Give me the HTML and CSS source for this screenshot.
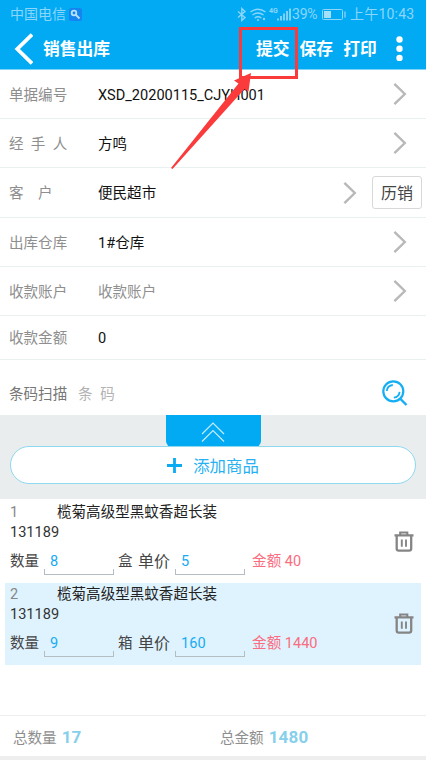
FILE: index.html
```html
<!DOCTYPE html>
<html lang="zh-CN">
<head>
<meta charset="utf-8">
<title>销售出库</title>
<link rel="stylesheet" href="styles.css">
</head>
<body>
<svg class="defs" width="0" height="0">
  <symbol id="chev" viewBox="0 0 14 24"><path d="M1.4 1.8L11.8 12L1.4 22.2" fill="none" stroke="#b8b8b8" stroke-width="2.4"/></symbol>
  <symbol id="trash" viewBox="0 0 20 21"><g fill="none" stroke="#858585"><path d="M.5 4.4H19.5M6.2 4V1.5H13.3V4" stroke-width="2.1"/><path d="M2.7 5V17.5Q2.7 19.6 4.8 19.6H15Q17.2 19.6 17.2 17.5V5" stroke-width="2.3"/><path d="M7.8 8.4V15.8M12 8.4V15.8" stroke-width="1.9"/></g></symbol>
</svg>
<div class="screen">
  <header class="header">
    <div class="status">
      <span>中国电信</span>
      <svg class="key" width="13" height="13" viewBox="0 0 13 13"><rect width="13" height="13" rx="2.5" fill="#1684ee"/><circle cx="5" cy="5" r="2.3" fill="none" stroke="#b5e2ff" stroke-width="1.8"/><path d="M6.5 6.5L10.5 10.5" stroke="#b5e2ff" stroke-width="1.8"/></svg>
      <svg class="signals" width="54" height="15" viewBox="0 0 54 15"><g fill="none" stroke="#8bd6fa" stroke-width="1.4"><path d="M1 4.5L8 10.5L4.8 13.5V1.5L8 4.5L1 10.5"/><path d="M13.5 5Q21 -.5 28.5 5M15.5 8Q21 4 26.5 8M17.7 11Q21 8.5 24.3 11"/></g><circle cx="21" cy="13" r="1" fill="#8bd6fa"/><circle cx="27" cy="12" r="1.2" fill="#8bd6fa"/><text x="32" y="6" class="net">4G</text><path d="M41 13.5V11.5M44 13.5V9M47 13.5V6.5M50 13.5V4M53 13.5V1.5" stroke="#8bd6fa" stroke-width="1.8"/></svg>
      <span class="pct">39%</span>
      <svg class="batt" width="24" height="11" viewBox="0 0 24 11"><rect x=".5" y=".5" width="20" height="10" rx="1" fill="none" stroke="#8bd6fa"/><rect x="2" y="2" width="7" height="7" fill="#a5e0fb"/><path d="M23 2.5V8.5" stroke="#8bd6fa" stroke-width="1.3"/></svg>
      <span class="clock">上午10:43</span>
    </div>
    <div class="bar">
      <svg class="back" width="19" height="32" viewBox="0 0 19 32"><path d="M18 1.5L3.3 16L18 30.5" fill="none" stroke="#fff" stroke-width="3.8"/></svg>
      <h1>销售出库</h1>
      <span class="act submit">提交</span><span class="act save">保存</span><span class="act print">打印</span>
      <svg class="more" width="7" height="26" viewBox="0 0 7 26"><g fill="#fff"><circle cx="3.5" cy="3.5" r="3.2"/><circle cx="3.5" cy="12.7" r="3.2"/><circle cx="3.5" cy="21.9" r="3.2"/></g></svg>
    </div>
  </header>
  <main>
    <div class="row"><span class="label">单据编号</span><span class="value">XSD_20200115_CJYH001</span><svg class="chev"><use href="#chev"/></svg></div>
    <div class="row"><span class="label three">经手人</span><span class="value">方鸣</span><svg class="chev"><use href="#chev"/></svg></div>
    <div class="row tall"><span class="label two">客户</span><span class="value">便民超市</span><svg class="chev"><use href="#chev"/></svg><span class="history">历销</span></div>
    <div class="row"><span class="label">出库仓库</span><span class="value">1#仓库</span><svg class="chev"><use href="#chev"/></svg></div>
    <div class="row"><span class="label">收款账户</span><span class="value empty">收款账户</span><svg class="chev"><use href="#chev"/></svg></div>
    <div class="row short"><span class="label">收款金额</span><span class="value">0</span></div>
    <div class="scan"><span class="label">条码扫描</span><span class="hint">条 码</span>
      <svg width="26" height="26" viewBox="0 0 26 26" fill="none" stroke="#14aef4"><circle cx="11.3" cy="11.3" r="10" stroke-width="2.2"/><path d="M18 18.5L24.5 25" stroke-width="2.4"/><path d="M4.8 11Q5.3 5.5 10.8 5M17.6 11.8Q17 17 11.8 17.6" stroke-width="1.8"/></svg>
    </div>
    <section class="add">
      <div class="tab"><svg width="24" height="20" viewBox="0 0 24 20"><path d="M1 12L12 1L23 12M1 19.5L12 8.5L23 19.5" fill="none" stroke="#c4ecff" stroke-width="1.2"/></svg></div>
      <div class="pill"><svg width="15" height="15" viewBox="0 0 15 15"><path d="M0 7.5H15M7.5 0V15" stroke="#0aabf3" stroke-width="2.8"/></svg><span>添加商品</span></div>
    </section>
    <section class="items">
      <article class="item">
        <div class="name"><span class="idx">1</span><span>榄菊高级型黑蚊香超长装</span></div>
        <div class="code">131189</div>
        <div class="nums"><span>数量</span><span class="field">8</span><span class="unit">盒</span><span class="price">单价</span><span class="field">5</span><span class="sum">金额 40</span></div>
        <svg class="trash"><use href="#trash"/></svg>
      </article>
      <article class="item alt">
        <div class="name"><span class="idx">2</span><span>榄菊高级型黑蚊香超长装</span></div>
        <div class="code">131189</div>
        <div class="nums"><span>数量</span><span class="field">9</span><span class="unit">箱</span><span class="price">单价</span><span class="field">160</span><span class="sum">金额 1440</span></div>
        <svg class="trash"><use href="#trash"/></svg>
      </article>
    </section>
  </main>
  <footer class="totals"><div>总数量<b>17</b></div><div>总金额<b>1480</b></div></footer>
  <svg class="callout" width="128" height="143" viewBox="0 0 128 143"><rect x="70.5" y="1.5" width="56" height="49" fill="none" stroke="#fb3b3b" stroke-width="3"/><path d="M81 46L64 53.5L68.5 56.5L1 141L2.5 142L74.5 62L78.5 64.5Z" fill="#fb3b3b"/></svg>
</div>
</body>
</html>
```

FILE: styles.css
```css
* { box-sizing: border-box; }
body { margin: 0; background: #fff; font-family: Roboto, "Noto Sans CJK SC", sans-serif; font-size: 14.55px; line-height: 20px; color: #222; }
svg { display: block; flex: none; }
.defs { position: absolute; }
.screen { position: relative; width: 426px; height: 760px; overflow: hidden; display: flex; flex-direction: column; }
span, h1, b { white-space: nowrap; }

.header { height: 70px; background: #02aaf4; border-bottom: 1px solid #7fd3f7; }
.status { height: 28px; display: flex; align-items: center; padding-left: 10px; color: #8bd6fa; font-size: 14px; }
.key { margin-left: 3px; }
.signals { margin-left: 155px; }
.net { font-size: 7px; font-weight: 700; fill: #8bd6fa; }
.pct { width: 30px; margin-left: 1px; letter-spacing: -.2px; }
.clock { margin-left: 4px; letter-spacing: .2px; }
.bar { height: 41px; display: flex; align-items: center; padding-left: 14px; color: #fff; font-weight: 700; font-size: 16.8px; }
.bar h1 { width: 213px; margin: 0 0 0 10px; font-size: 16.8px; font-weight: 700; }
.save { margin-left: 10px; }
.print { margin-left: 10px; }
.more { margin-left: 19px; }
.bar h1, .act { padding-top: 1px; }

.row { height: 49px; display: flex; align-items: center; padding: 0 19px 0 9px; border-bottom: 1px solid #e9f0f0; }
.tall { height: 50px; padding-right: 4px; }
.short { height: 44px; }
.label { width: 89px; color: #8e8e8e; }
.label, .value, .hint { padding-top: 3px; }
.three { letter-spacing: 7.3px; }
.two { letter-spacing: 14.5px; }
.value { flex: 1; color: #111; }
.empty { color: #909090; }
.chev { width: 14px; height: 24px; }
.history { width: 50px; height: 33px; margin-left: 15px; border: 1px solid #d8d8d8; border-radius: 3px; line-height: 34px; text-align: center; font-size: 16px; color: #444; }
.scan { height: 55px; display: flex; align-items: center; padding: 11px 18px 0 9px; }
.scan .label { width: 69px; color: #777; }
.hint { flex: 1; color: #b3b3b3; word-spacing: 4px; }

.add { height: 84px; background: #e9eded; display: flex; flex-direction: column; align-items: center; }
.tab { width: 95px; height: 32px; background: #02aaf4; border-radius: 0 0 6px 6px; display: flex; justify-content: center; padding-top: 7px; }
.pill { width: 406px; height: 38px; margin-top: -1px; background: #fff; border: 1px solid #8ed8f0; border-radius: 19px; display: flex; align-items: center; justify-content: center; gap: 11px; color: #27b1f3; font-size: 16.4px; }
.pill span { padding-top: 3px; }

.items { padding: 0 5px; }
.item { height: 84px; display: grid; grid-template-columns: 1fr 20px; grid-template-rows: 22px 20px 40px; padding: 2px 7px 0 5px; }
.item + .item { height: 82px; padding-top: 0; }
.alt { background: #dff3fe; }
.name { display: flex; align-items: center; height: 23px; }
.idx { width: 47px; color: #888; }
.code { grid-row: 2; line-height: 20px; color: #333; }
.nums { grid-row: 3; display: flex; align-items: center; color: #444; height: 37px; }
.field { position: relative; width: 70px; height: 32px; line-height: 31px; margin: 0 0 0 5px; padding-left: 6px; color: #16abf4; }
.field::after { content: ""; position: absolute; left: 0; right: 0; bottom: 3px; height: 5px; border: solid #b4bdc2; border-width: 0 1px 1px; }
.unit { width: 20px; margin-left: 4px; }
.price { font-size: 16px; width: 32px; }
.sum { margin-left: 7px; color: #fa6c80; }
.trash { grid-column: 2; grid-row: 1 / 4; width: 20px; height: 21px; margin-top: 30px; }

.totals { height: 41px; margin-top: auto; margin-bottom: 4px; border-top: 1px solid #eee; display: grid; grid-template-columns: 207px 1fr; padding: 4px 0 0 13px; align-items: center; color: #8e8e8e; }
.totals b { margin-left: 5px; color: #87d0ec; font-size: 17px; letter-spacing: .2px; }
.screen::after { content: ""; position: absolute; left: 0; right: 0; bottom: 0; height: 4px; background: #eee; }
.callout { position: absolute; left: 170px; top: 27px; }
```
